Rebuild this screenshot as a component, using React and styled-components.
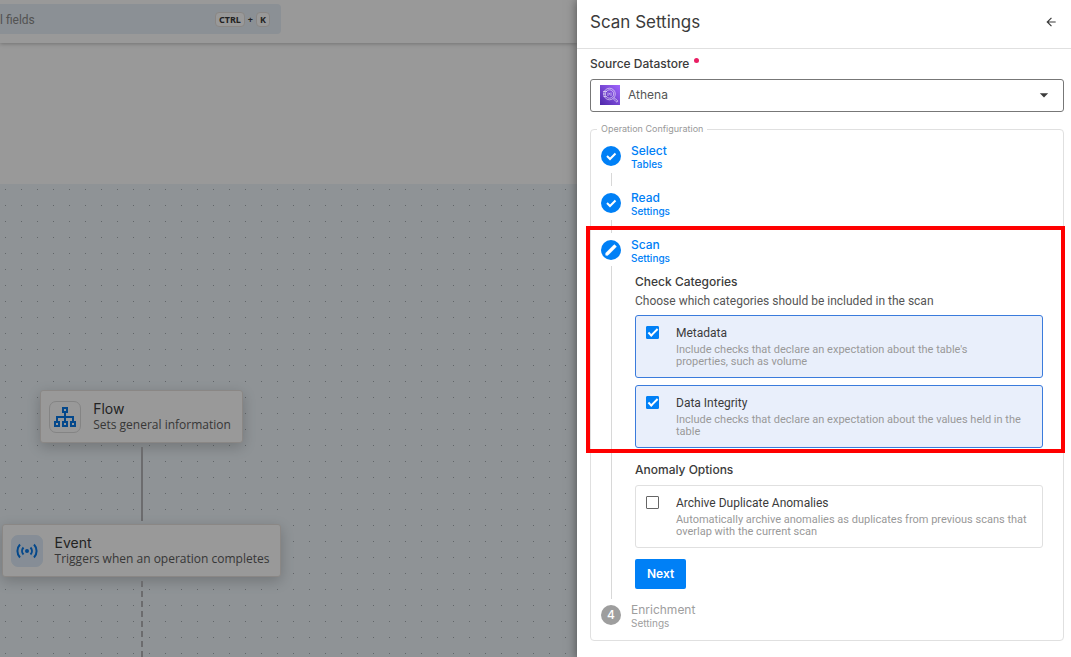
import React, { useState } from 'react';
import styled, { createGlobalStyle } from 'styled-components';

const GlobalStyle = createGlobalStyle`
  *, *::before, *::after {
    box-sizing: border-box;
  }

  body {
    margin: 0;
    background: #fff;
    color: #3b3b3b;
    font-family: Inter, "Liberation Sans", sans-serif;
    font-size: 12px;
    line-height: 16px;
  }

  button, input, select {
    font: inherit;
    color: inherit;
  }
`;

/* ---------- page behind the drawer ---------- */

const Layout = styled.div`
  display: flex;
  min-height: 100vh;
`;

const Page = styled.main`
  position: relative;
  display: flex;
  flex-direction: column;
  flex: 1;
  min-width: 0;
  overflow: hidden;
`;

const Scrim = styled.div`
  position: absolute;
  inset: 0;
  background: rgba(0, 0, 0, 0.4);
`;

const TopBar = styled.header`
  display: flex;
  padding: 4px 0 9px;
  box-shadow: 0 1px 4px rgba(0, 0, 0, 0.25);
`;

const SearchBox = styled.label`
  display: flex;
  align-items: center;
  gap: 3px;
  width: 281px;
  height: 30px;
  padding: 0 11px 0 0;
  border-radius: 0 4px 4px 0;
  background: #e8f1f8;

  input {
    flex: 1;
    min-width: 0;
    padding: 2px 0 0;
    border: 0;
    outline: 0;
    background: none;
    font-family: Roboto, sans-serif;
    font-size: 12px;
  }

  input::placeholder {
    color: #8a8a8a;
    opacity: 1;
  }
`;

const Key = styled.kbd`
  padding: 0 3px;
  border: 1px solid #e4e0dc;
  border-radius: 4px;
  background: #fff;
  font: bold 9px/13px "Noto Sans", sans-serif;
`;

const Plus = styled.span`
  font: bold 9px/13px "Noto Sans", sans-serif;
`;

const Summary = styled.section`
  height: 141px;
`;

const Canvas = styled.section`
  flex: 1;
  padding-top: 206px;
  background-color: #eef5fa;
  background-image: conic-gradient(from 270deg at 1px 1px, #a4aab0 90deg, transparent 0);
  background-position: 5px 5px;
  background-size: 16px 16px;
`;

const Flow = styled.div`
  display: flex;
  flex-direction: column;
  align-items: center;
  width: 283px;
`;

const Node = styled.article`
  display: flex;
  align-items: center;
  gap: 12px;
  padding: 10px 11px 9px 8px;
  border: 1px solid #e6e2de;
  border-radius: 3px;
  background: #fff;
  box-shadow: 0 4px 14px rgba(0, 0, 0, 0.2);
  white-space: nowrap;

  h3 {
    margin: 0;
    font-size: 14px;
    font-weight: 400;
    line-height: 16px;
  }

  p {
    margin: 0;
    color: #5c5c5c;
    font-family: "Open Sans", sans-serif;
    font-size: 12px;
    line-height: 16px;
  }
`;

const NodeIcon = styled.span`
  display: grid;
  place-items: center;
  width: 32px;
  height: 32px;
  border: 1px solid ${({ $filled }) => ($filled ? '#dfecfa' : '#dcdcdc')};
  border-radius: 7px;
  background: ${({ $filled }) => ($filled ? '#dfecfa' : '#fff')};
  color: #0878e8;
`;

const Connector = styled.div`
  height: ${({ $dashed }) => ($dashed ? 76 : 74)}px;
  margin: 4px 0 3px;
  border-left: 2px ${({ $dashed }) => ($dashed ? 'dashed' : 'solid')} #b4b4b8;
`;

/* ---------- drawer ---------- */

const Drawer = styled.aside`
  position: relative;
  flex: 0 0 46%;
  min-width: 494px;
  background: #fff;
  box-shadow: 0 0 10px rgba(0, 0, 0, 0.5);
`;

const DrawerHeader = styled.header`
  display: flex;
  align-items: center;
  justify-content: space-between;
  height: 49px;
  padding: 0 13px 4px;
  border-bottom: 1px solid #e0e0e0;

  h1 {
    margin: 0;
    font-size: 17px;
    font-weight: 400;
    line-height: 24px;
  }
`;

const IconButton = styled.button`
  display: grid;
  place-items: center;
  padding: 0;
  border: 0;
  background: none;
  cursor: pointer;
`;

const Form = styled.form`
  padding: 7px 7px 17px 13px;
`;

const FieldLabel = styled.label`
  display: flex;
  gap: 5px;
  font-weight: 500;
`;

const Required = styled.span`
  width: 5px;
  height: 5px;
  margin-top: 2px;
  border-radius: 50%;
  background: #e91e63;
`;

const SelectBox = styled.div`
  display: grid;
  grid-template-columns: 20px 1fr 20px;
  align-items: center;
  gap: 8px;
  height: 33px;
  margin: 7px 0 11px;
  padding: 0 9px 1px;
  border: 1px solid #777;
  border-radius: 3px;

  select {
    padding: 0;
    border: 0;
    outline: 0;
    appearance: none;
    background: none;
    color: #555;
  }
`;

const Steps = styled.fieldset`
  min-width: 0;
  margin: 0;
  padding: 9px 10px 9px;
  border: 1px solid #e0e0e0;
  border-radius: 4px;

  > legend {
    margin-left: -4px;
    padding: 0 4px;
    color: #999;
    font-size: 9px;
    line-height: 12px;
  }
`;

const StepHead = styled.div`
  display: flex;
  gap: 10px;
  padding-bottom: 2px;
  color: ${({ $pending }) => ($pending ? '#9e9e9e' : '#0080f6')};
  font-weight: ${({ $pending }) => ($pending ? 400 : 500)};

  strong, small {
    display: block;
    font-weight: inherit;
  }

  strong {
    font-size: 12px;
    line-height: 14px;
  }

  small {
    font-size: 10px;
    line-height: 12px;
  }
`;

const Badge = styled.span`
  display: grid;
  place-items: center;
  width: 20px;
  height: 20px;
  margin-top: 2px;
  border-radius: 50%;
  background: ${({ $pending }) => ($pending ? '#9e9e9e' : '#0080f6')};
  color: #fff;
  font-size: 12px;
  font-weight: 500;
`;

const StepLine = styled.div`
  height: 13px;
  margin: 1px 0 5px 10px;
  border-left: 1px solid #d8d8d8;
`;

const Highlighted = styled.div`
  position: relative;

  &::after {
    content: '';
    position: absolute;
    inset: -12px -12px -5px -15px;
    border: 4px solid #f00;
    pointer-events: none;
  }
`;

const StepBody = styled.section`
  margin: 0 0 ${({ $last }) => ($last ? 4 : 0)}px 10px;
  padding: ${({ $last }) => ($last ? '14px 10px 10px 23px' : '8px 10px 0 23px')};
  border-left: 1px solid #d8d8d8;

  h2 {
    margin: 0;
    font-size: 12px;
    font-weight: 500;
    line-height: 16px;
  }

  > p {
    margin: 2px 0 0;
    color: #555;
    font-family: Roboto, sans-serif;
    line-height: 18px;
  }
`;

const Options = styled.div`
  display: grid;
  gap: 7px;
  margin: ${({ $top }) => $top}px 0 0;
`;

const OptionCard = styled.label`
  display: flex;
  gap: 17px;
  padding: 9px 10px;
  border: 1px solid ${({ $checked }) => ($checked ? '#3a7bdc' : '#e0e0e0')};
  border-radius: 3px;
  background: ${({ $checked }) => ($checked ? '#e9effb' : '#fff')};
  font-family: Roboto, sans-serif;
  cursor: pointer;

  span {
    display: block;
  }

  small {
    display: block;
    margin-top: 3px;
    color: #999;
    font-size: 11px;
    line-height: 12px;
    white-space: pre-line;
  }
`;

const Checkbox = styled.input.attrs({ type: 'checkbox' })`
  display: grid;
  place-items: center;
  flex: none;
  width: 13px;
  height: 13px;
  margin: 1px 0 0;
  appearance: none;
  border: 1px solid #666;
  border-radius: 1px;

  &:checked {
    border-color: #0080f6;
    background: #0080f6;
  }

  &:checked::before {
    content: '';
    width: 10px;
    height: 5px;
    margin-bottom: 3px;
    border: solid #fff;
    border-width: 0 0 2px 2px;
    transform: rotate(-45deg);
  }
`;

const NextButton = styled.button`
  height: 30px;
  margin-top: 11px;
  padding: 0 12px;
  border: 0;
  border-radius: 2px;
  background: #0080f6;
  color: #fff;
  font-weight: 600;
  cursor: pointer;
`;

const SitemapIcon = () => (
  <svg width="24" height="22" viewBox="0 0 24 22" fill="none" stroke="currentColor" strokeWidth="2">
    <path d="M10 2h4v4h-4zM2 16h4v4H2zM10 16h4v4h-4zM18 16h4v4h-4zM12 6v10M4 16v-5h16v5" />
  </svg>
);

const BroadcastIcon = () => (
  <svg width="22" height="16" viewBox="0 0 22 16" fill="none" stroke="currentColor" strokeWidth="2">
    <circle cx="11" cy="8" r="2" fill="currentColor" stroke="none" />
    <path d="M7.5 4.5a5 5 0 0 0 0 7M14.5 4.5a5 5 0 0 1 0 7M4 1.5a9.5 9.5 0 0 0 0 13M18 1.5a9.5 9.5 0 0 1 0 13" />
  </svg>
);

const BackIcon = () => (
  <svg width="14" height="14" viewBox="0 0 24 24" fill="currentColor">
    <path d="M20 11v2H8l5.500 5.500-1.420 1.420L4.160 12l7.920-7.920L13.500 5.500 8 11h12z" />
  </svg>
);

const CaretIcon = () => (
  <svg width="20" height="20" viewBox="0 0 24 24" fill="currentColor" pointerEvents="none">
    <path d="m7 10 5 5 5-5z" />
  </svg>
);

const CheckIcon = () => (
  <svg width="14" height="14" viewBox="0 0 14 14" fill="none" stroke="currentColor" strokeWidth="2">
    <path d="m3 7 3 3 5.500-5.500" />
  </svg>
);

const PencilIcon = () => (
  <svg width="14" height="14" viewBox="0 0 24 24" fill="currentColor" stroke="currentColor">
    <path d="M20.710 7.040c.390-.390.390-1.040 0-1.410l-2.340-2.340c-.370-.390-1.020-.390-1.410 0L3 17.250V21h3.750z" />
  </svg>
);

const AthenaIcon = () => (
  <svg width="20" height="20" viewBox="0 0 20 20" fill="none" aria-hidden="true">
    <defs>
      <linearGradient id="athena" x1="0" y1="20" x2="20" y2="0" gradientUnits="userSpaceOnUse">
        <stop stopColor="#4d27a8" />
        <stop offset="1" stopColor="#a166ff" />
      </linearGradient>
    </defs>
    <path d="M0 0h20v20H0z" fill="url(#athena)" />
    <g stroke="#fff" strokeWidth=".8" strokeOpacity=".7">
      <circle cx="9.5" cy="9" r="5.8" />
      <circle cx="9.5" cy="9" r="4.2" />
      <path d="M8 11V7.500M9.500 9.500V8M11 11V7.500M3 6.500h4M3 9h2.500M3.500 11.500h3" />
      <path d="m13.800 12.600 3.500 2.700c1 1-.3 2.300-1.300 1.300L13 13.500" />
    </g>
  </svg>
);

const Step = ({ title, subtitle, pending, children }) => (
  <StepHead $pending={pending}>
    <Badge $pending={pending}>{children}</Badge>
    <div>
      <strong>{title}</strong>
      <small>{subtitle}</small>
    </div>
  </StepHead>
);

const Option = ({ title, text, initial = false }) => {
  const [checked, setChecked] = useState(initial);
  return (
    <OptionCard $checked={checked}>
      <Checkbox checked={checked} onChange={(e) => setChecked(e.target.checked)} />
      <div>
        <span>{title}</span>
        <small>{text}</small>
      </div>
    </OptionCard>
  );
};

const App = () => {
  return (
    <>
      <GlobalStyle />
      <Layout>
        <Page>
          <TopBar>
            <SearchBox>
              <input type="text" placeholder="l fields" aria-label="Search fields" />
              <Key>CTRL</Key>
              <Plus>+</Plus>
              <Key>K</Key>
            </SearchBox>
          </TopBar>
          <Summary />
          <Canvas>
            <Flow>
              <Node>
                <NodeIcon><SitemapIcon /></NodeIcon>
                <div>
                  <h3>Flow</h3>
                  <p>Sets general information</p>
                </div>
              </Node>
              <Connector />
              <Node>
                <NodeIcon $filled><BroadcastIcon /></NodeIcon>
                <div>
                  <h3>Event</h3>
                  <p>Triggers when an operation completes</p>
                </div>
              </Node>
              <Connector $dashed />
            </Flow>
          </Canvas>
          <Scrim />
        </Page>

        <Drawer>
          <DrawerHeader>
            <h1>Scan Settings</h1>
            <IconButton type="button" aria-label="Back"><BackIcon /></IconButton>
          </DrawerHeader>
          <Form onSubmit={(e) => e.preventDefault()}>
            <FieldLabel htmlFor="datastore">
              Source Datastore
              <Required />
            </FieldLabel>
            <SelectBox>
              <AthenaIcon />
              <select id="datastore">
                <option>Athena</option>
              </select>
              <CaretIcon />
            </SelectBox>

            <Steps>
              <legend>Operation Configuration</legend>
              <Step title="Select" subtitle="Tables"><CheckIcon /></Step>
              <StepLine />
              <Step title="Read" subtitle="Settings"><CheckIcon /></Step>
              <StepLine />
              <Highlighted>
                <Step title="Scan" subtitle="Settings"><PencilIcon /></Step>
                <StepBody>
                  <h2>Check Categories</h2>
                  <p>Choose which categories should be included in the scan</p>
                  <Options $top={5}>
                    <Option
                      initial
                      title="Metadata"
                      text={"Include checks that declare an expectation about the table's\nproperties, such as volume"}
                    />
                    <Option
                      initial
                      title="Data Integrity"
                      text={'Include checks that declare an expectation about the values held in the\ntable'}
                    />
                  </Options>
                </StepBody>
              </Highlighted>
              <StepBody $last>
                <h2>Anomaly Options</h2>
                <Options $top={7}>
                  <Option
                    title="Archive Duplicate Anomalies"
                    text={'Automatically archive anomalies as duplicates from previous scans that\noverlap with the current scan'}
                  />
                </Options>
                <NextButton type="submit">Next</NextButton>
              </StepBody>
              <Step title="Enrichment" subtitle="Settings" pending>4</Step>
            </Steps>
          </Form>
        </Drawer>
      </Layout>
    </>
  );
};

export default App;
